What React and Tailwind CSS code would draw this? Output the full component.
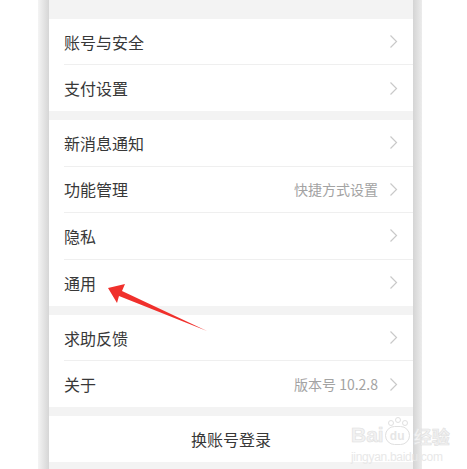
const font = { fontFamily: '"Noto Sans CJK SC", "Noto Sans", sans-serif' };

function Chevron() {
  return (
    <svg width="9" height="15" viewBox="0 0 9 15" className="shrink-0">
      <path d="M1.5 1.5 L7.5 7.5 L1.5 13.5" fill="none" stroke="#c9c9c9" strokeWidth="1.2" />
    </svg>
  );
}

function Row({ label, value, last, h = 'h-[46px]' }) {
  return (
    <div className={`flex items-stretch bg-white pl-[15px] ${h}`}>
      <div
        className={`flex flex-1 items-center pr-[15px] ${
          last ? '' : 'border-b border-[#efefef]'
        }`}
      >
        <span className="flex-1 text-[16px] text-[#383838]">{label}</span>
        {value && <span className="mr-[11px] text-[14px] text-[#a3a3a3]">{value}</span>}
        <Chevron />
      </div>
    </div>
  );
}

export default function App() {
  return (
    <div className="relative h-[469px] w-[467px] overflow-hidden bg-white" style={font}>
      <div className="flex h-full">
        <div className="w-[38px] bg-white" />
        <div className="w-[11px] bg-gradient-to-r from-[#f4f4f4] to-[#d6d6d6]" />

        <div className="flex w-[364px] flex-col bg-[#f3f3f3]">
          <div className="h-[19px]" />
          <Row label="账号与安全" />
          <Row label="支付设置" last />
          <div className="h-[9px]" />
          <Row label="新消息通知" h="h-[46.5px]" />
          <Row label="功能管理" value="快捷方式设置" h="h-[46.5px]" />
          <Row label="隐私" h="h-[46.5px]" />
          <Row label="通用" last h="h-[46.5px]" />
          <div className="h-[9px]" />
          <Row label="求助反馈" />
          <Row label="关于" value="版本号 10.2.8" last />
          <div className="h-[9px]" />
          <div className="flex h-[46px] items-center justify-center bg-white text-[16px] text-[#383838]">
            换账号登录
          </div>
        </div>

        <div className="w-[9px] bg-gradient-to-r from-[#d4d4d4] to-[#ececec]" />
        <div className="flex-1 bg-white" />
      </div>

      {/* red annotation arrow */}
      <svg className="absolute left-0 top-0" width="467" height="469">
        <polygon
          points="108,288 125,284 122,291 207,331 119,296 117,303"
          fill="#f0302c"
        />
      </svg>

      {/* watermark */}
      <div className="absolute left-[351px] top-[424px] text-[#f2f2f2]" style={{ fontFamily: '"Liberation Sans", sans-serif' }}>
        <div className="flex items-end leading-none">
          <span className="text-[21px] font-bold" style={{ WebkitTextStroke: '0.6px #e0e0e0' }}>Bai</span>
          <span className="relative ml-[1px] flex h-[19px] w-[25px] items-center justify-center rounded-full border border-[#e0e0e0] text-[12px] font-bold text-[#e6e6e6]">
            du
            <span className="absolute -top-[7px] left-[2px] h-[6px] w-[6px] rounded-full border border-[#e0e0e0]" />
            <span className="absolute -top-[10px] left-[9px] h-[6px] w-[6px] rounded-full border border-[#e0e0e0]" />
            <span className="absolute -top-[7px] left-[16px] h-[6px] w-[6px] rounded-full border border-[#e0e0e0]" />
          </span>
          <span className="ml-[4px] text-[18px] font-bold" style={{ ...font, WebkitTextStroke: '0.6px #e0e0e0' }}>经验</span>
        </div>
        <div className="mt-[3px] text-[12px] tracking-tight text-[#e8e8e8]">jingyan.baidu.com</div>
      </div>
    </div>
  );
}
